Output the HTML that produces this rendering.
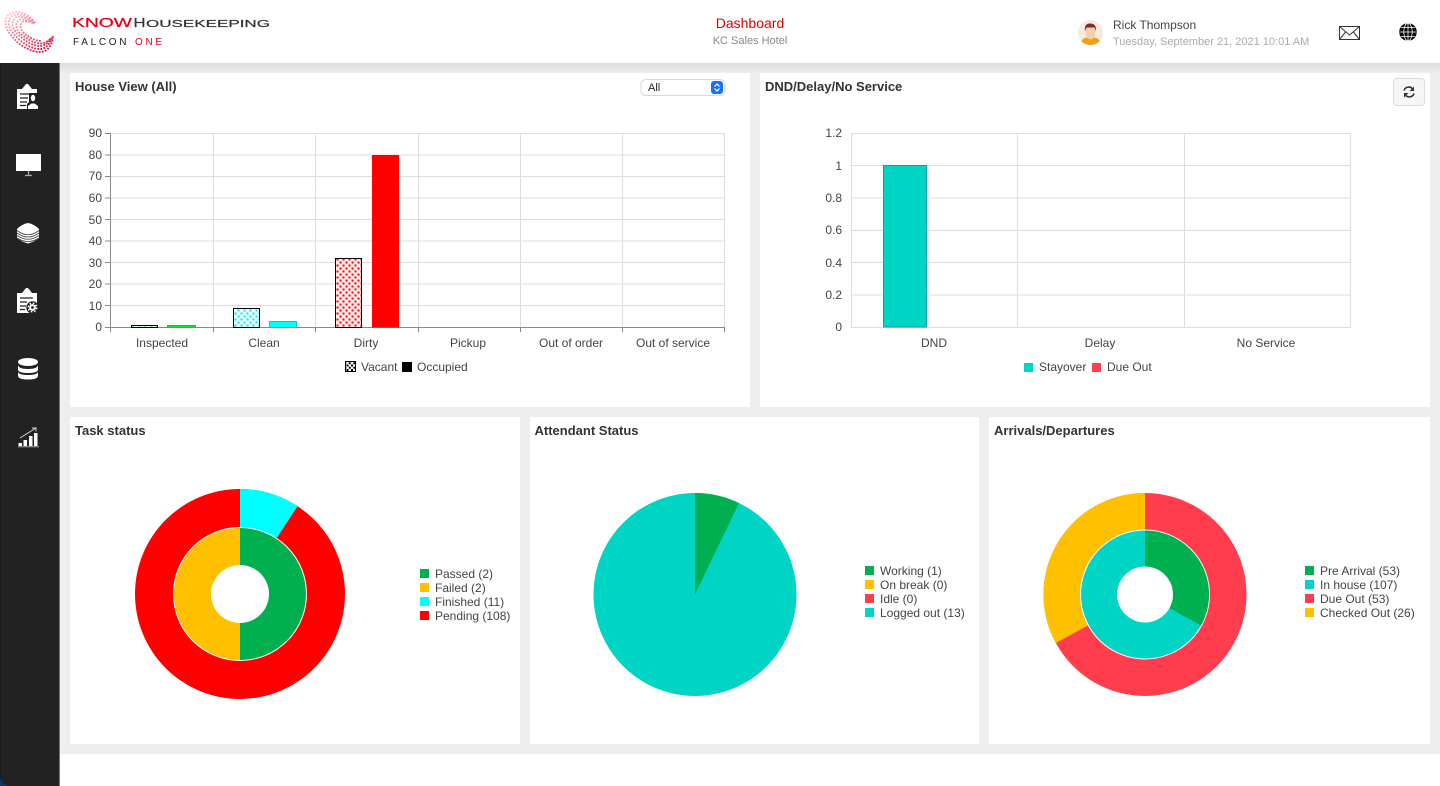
<!DOCTYPE html>
<html lang="en"><head><meta charset="utf-8"><title>Dashboard</title>
<style>
html,body{margin:0;padding:0;width:1440px;height:786px;overflow:hidden;background:#fff}
svg{display:block;font-family:"Liberation Sans",Arial,sans-serif}
.t{font-size:13px;font-weight:bold;fill:#333}
.l{font-size:12px;fill:#444}
.m{text-anchor:middle}
.e{text-anchor:end}
.g{stroke:#ddd;stroke-width:1;fill:none}
.a{stroke:#888;stroke-width:1;fill:none}
</style></head><body>
<svg width="1440" height="786" viewBox="0 0 1440 786" xmlns="http://www.w3.org/2000/svg">
<defs>
<linearGradient id="sh" x1="0" y1="0" x2="0" y2="1"><stop offset="0" stop-color="#dcdcdc"/><stop offset="1" stop-color="#eee"/></linearGradient>
<linearGradient id="lg" gradientUnits="userSpaceOnUse" x1="20" y1="12" x2="38" y2="52"><stop offset="0" stop-color="#fbb8c8"/><stop offset=".5" stop-color="#f0607f"/><stop offset="1" stop-color="#dc0a32"/></linearGradient>
<pattern id="hg" width="6" height="6" patternUnits="userSpaceOnUse"><rect width="6" height="6" fill="#fff"/><path d="M0.500 0.500h2v2h-2zM3.500 3.500h2v2h-2z" fill="#00e020"/></pattern>
<pattern id="hc" width="6" height="6" patternUnits="userSpaceOnUse"><rect width="6" height="6" fill="#eaffff"/><path d="M0.500 0.500h2v2h-2zM3.500 3.500h2v2h-2z" fill="#00e8ee"/></pattern>
<pattern id="hr" width="6" height="6" patternUnits="userSpaceOnUse"><rect width="6" height="6" fill="#ffecec"/><path d="M0.500 0.500h2v2h-2zM3.500 3.500h2v2h-2z" fill="#f00"/></pattern>
<pattern id="hk" width="4.500" height="4.500" patternUnits="userSpaceOnUse"><rect width="4.500" height="4.500" fill="#fff"/><path d="M0 0h2v2h-2zM2.250 2.250h2v2h-2z" fill="#000"/></pattern>
</defs>

<!-- page background -->
<rect x="59" y="63" width="1381" height="691" fill="#eee"/>
<rect x="59" y="63" width="1381" height="10" fill="url(#sh)"/>
<rect x="59" y="754" width="1381" height="32" fill="#fff"/>

<!-- sidebar -->
<rect x="0" y="60" width="60" height="726" fill="#222"/>
<rect x="0" y="60" width="1" height="726" fill="#1a1a1a"/>
<path d="M0 776Q1 784 8 786H0Z" fill="#0b3a63"/>
<rect x="59" y="63" width="1" height="723" fill="#777"/>

<!-- header -->
<rect x="0" y="0" width="1440" height="63" fill="#fff"/>

<!-- logo -->
<g fill="none" stroke="url(#lg)" stroke-width="1.800" stroke-dasharray="1.800 1.300">
<path d="M35 23C29 14 18 9 10 14C3 18 5 27 10 34C18 45 30 52 40 52C48 52 53 44 53 35"/>
<path d="M35 23C28 16 18 12 12 16C7 20 8 27 13 33C20 42 31 49 40 49C46 49 51 43 52.500 36"/>
<path d="M34 23C27 18 19 15 15 18C11 22 12 28 16 32C23 40 32 46 40 46C45 46 49 42 52 37"/>
<path d="M33 23C26 20 21 18 18 21C15 24 16 28 19 32C25 38 33 43 41 43.500C45 43.500 48 41 50 39"/>
<path d="M30 22C26 21 22 21 21 24C20 27 21 30 23 32C28 37 35 41 42 41"/>
</g>
<text x="72" y="27" font-size="13" fill="#e8001c" stroke="#e8001c" stroke-width=".25" textLength="60" lengthAdjust="spacingAndGlyphs">KNOW</text>
<text x="133.500" y="27" font-size="13" fill="#333" stroke="#333" stroke-width=".2" textLength="12" lengthAdjust="spacingAndGlyphs">H</text>
<text x="146" y="27" font-size="10" fill="#333" stroke="#333" stroke-width=".2" textLength="124" lengthAdjust="spacingAndGlyphs">OUSEKEEPING</text>
<text x="73" y="45" font-size="10" fill="#222" letter-spacing="2.700">FALCON</text>
<text x="135" y="45" font-size="10" fill="#e8001c" letter-spacing="2.700">ONE</text>

<!-- centre title -->
<text x="750" y="28" font-size="14" fill="#e00000" class="m">Dashboard</text>
<text x="750" y="44" font-size="11" fill="#888" class="m">KC Sales Hotel</text>

<!-- user -->
<circle cx="1090.500" cy="32.500" r="12.500" fill="#f5ebe0"/>
<path d="M1081 41Q1084 37.500 1087 37.500H1094Q1097 37.500 1100 41Q1096 45 1090.500 45Q1085 45 1081 41Z" fill="#f0a010"/>
<path d="M1085.500 27H1095.500V34Q1094.500 39 1090.500 39.500Q1086.500 39 1085.500 34Z" fill="#f2d0ac"/>
<path d="M1085 31Q1084 24 1089.500 23.500Q1096.500 23 1096 31L1094.500 27.500H1086.500Z" fill="#7a2a30"/>
<text x="1113" y="29" font-size="12" fill="#444">Rick Thompson</text>
<text x="1113" y="45" font-size="11" fill="#aaa">Tuesday, September 21, 2021 10:01 AM</text>
<g fill="none" stroke="#333" stroke-width="1"><rect x="1339.500" y="26.500" width="20" height="13"/><path d="M1339.500 26.500L1349.500 35L1359.500 26.500M1339.500 39.500L1346 31.500M1359.500 39.500L1353 31.500"/></g>
<circle cx="1408" cy="32" r="8.800" fill="#000"/>
<g fill="none" stroke="#fff" stroke-width=".8"><ellipse cx="1408" cy="32" rx="4.200" ry="8.800"/><path d="M1408 23V41M1399.500 32H1416.500M1401 27.500H1415M1401 36.500H1415"/></g>

<!-- panels -->
<rect x="70" y="73" width="680" height="334" fill="#fff"/>
<rect x="760" y="73" width="670" height="334" fill="#fff"/>
<rect x="70" y="417" width="450" height="327" fill="#fff"/>
<rect x="530" y="417" width="449" height="327" fill="#fff"/>
<rect x="989" y="417" width="441" height="327" fill="#fff"/>

<text x="75" y="91" class="t">House View (All)</text>
<text x="765" y="91" class="t">DND/Delay/No Service</text>
<text x="75" y="435" class="t">Task status</text>
<text x="534.500" y="435" class="t">Attendant Status</text>
<text x="994" y="435" class="t">Arrivals/Departures</text>

<!-- select -->
<rect x="641" y="79.500" width="84" height="16" rx="5" fill="#fff" stroke="#d8d8d8"/>
<text x="648" y="91" font-size="11" fill="#222">All</text>
<rect x="711" y="81" width="12" height="13" rx="3" fill="#1b72f0"/>
<path d="M714.500 86.500L717 84L719.500 86.500M714.500 88.500L717 91L719.500 88.500" fill="none" stroke="#fff" stroke-width="1.200"/>

<!-- refresh -->
<rect x="1393.500" y="78.500" width="31" height="27" rx="3" fill="#f6f6f6" stroke="#ddd"/>
<g fill="none" stroke="#333" stroke-width="1.600"><path d="M1404 90.500A5 5 0 0 1 1413 89.500"/><path d="M1414 93.500A5 5 0 0 1 1405 94.500"/></g>
<path d="M1414 86.500V91H1409.500Z M1404 97.500V93H1408.500Z" fill="#333"/>

<!-- bar chart 1 -->
<path class="g" d="M105 133.500H725M105 155H725M105 176.500H725M105 198H725M105 219.500H725M105 241H725M105 262.500H725M105 284H725M105 305.500H725"/>
<path class="g" d="M213.500 133V327M315.500 133V327M418.500 133V327M520.500 133V327M622.500 133V327M724.500 133V327"/>
<path class="a" d="M110.500 133V332M105 327.500H725M105 133.500H110M105 155H110M105 176.500H110M105 198H110M105 219.500H110M105 241H110M105 262.500H110M105 284H110M105 305.500H110M213.500 327V332M315.500 327V332M418.500 327V332M520.500 327V332M622.500 327V332M724.500 327V332"/>
<g class="l e">
<text x="102" y="137">90</text><text x="102" y="159">80</text><text x="102" y="180">70</text><text x="102" y="202">60</text><text x="102" y="224">50</text><text x="102" y="245">40</text><text x="102" y="267">30</text><text x="102" y="288">20</text><text x="102" y="310">10</text><text x="102" y="331">0</text>
</g>
<rect x="131.500" y="325.500" width="26" height="2" fill="url(#hg)" stroke="#000"/>
<rect x="167.500" y="325.500" width="28" height="2" fill="#00f020" stroke="#00d020"/>
<rect x="233.500" y="308.500" width="26" height="19" fill="url(#hc)" stroke="#000"/>
<rect x="269.500" y="321.500" width="27" height="6" fill="#0ff" stroke="#0cc"/>
<rect x="335.500" y="258.500" width="26" height="69" fill="url(#hr)" stroke="#000"/>
<rect x="372" y="155" width="27" height="172.500" fill="#f00"/>
<g class="l m">
<text x="162" y="347">Inspected</text><text x="264" y="347">Clean</text><text x="366" y="347">Dirty</text><text x="468" y="347">Pickup</text><text x="571" y="347">Out of order</text><text x="673" y="347">Out of service</text>
</g>
<rect x="345.500" y="361.500" width="10" height="10" fill="url(#hk)" stroke="#000"/>
<text x="361" y="371" class="l">Vacant</text>
<rect x="402" y="362" width="10" height="10" fill="#000"/>
<text x="417" y="371" class="l">Occupied</text>

<!-- bar chart 2 -->
<path class="g" d="M851 133.500H1351M851 165.500H1351M851 198H1351M851 230.500H1351M851 262.500H1351M851 295H1351M851 327.500H1351"/>
<path class="g" d="M851.500 133V327M1017.500 133V327M1184.500 133V327M1350.500 133V327"/>
<g class="l e">
<text x="842" y="137">1.2</text><text x="842" y="170">1</text><text x="842" y="202">0.8</text><text x="842" y="234">0.6</text><text x="842" y="267">0.4</text><text x="842" y="299">0.2</text><text x="842" y="331">0</text>
</g>
<rect x="883.500" y="165.500" width="43" height="161.500" fill="#00d4c4" stroke="#00a8a0"/>
<g class="l m"><text x="934" y="347">DND</text><text x="1100" y="347">Delay</text><text x="1266" y="347">No Service</text></g>
<rect x="1024" y="363" width="9" height="9" fill="#00d4c4"/><text x="1039" y="371" class="l">Stayover</text>
<rect x="1092" y="363" width="9" height="9" fill="#ff3d4d"/><text x="1107" y="371" class="l">Due Out</text>

<!-- Task status donut -->
<circle cx="240" cy="594" r="105" fill="#f00"/>
<path d="M240 594V489A105 105 0 0 1 297.600 506.200Z" fill="#0ff"/>
<path d="M240 527.500A66.500 66.500 0 0 1 240 660.500Z" fill="#00b050"/>
<path d="M240 527.500A66.500 66.500 0 0 0 240 660.500Z" fill="#ffc000"/>
<circle cx="240" cy="594" r="66.500" fill="none" stroke="#fff" stroke-width="1"/>
<circle cx="240" cy="594" r="29" fill="#fff"/>
<rect x="420" y="569" width="9" height="9" fill="#00b050"/><text x="435" y="578" class="l">Passed (2)</text>
<rect x="420" y="583" width="9" height="9" fill="#ffc000"/><text x="435" y="592" class="l">Failed (2)</text>
<rect x="420" y="597" width="9" height="9" fill="#0ff"/><text x="435" y="606" class="l">Finished (11)</text>
<rect x="420" y="611" width="9" height="9" fill="#f00"/><text x="435" y="620" class="l">Pending (108)</text>

<!-- Attendant pie -->
<circle cx="695" cy="594.500" r="101.500" fill="#00d4c4"/>
<path d="M695 594.500V493A101.500 101.500 0 0 1 739 503Z" fill="#00b050"/>
<rect x="865" y="566" width="9" height="9" fill="#00b050"/><text x="880" y="575" class="l">Working (1)</text>
<rect x="865" y="580" width="9" height="9" fill="#ffc000"/><text x="880" y="589" class="l">On break (0)</text>
<rect x="865" y="594" width="9" height="9" fill="#ff3d4d"/><text x="880" y="603" class="l">Idle (0)</text>
<rect x="865" y="608" width="9" height="9" fill="#00d4c4"/><text x="880" y="617" class="l">Logged out (13)</text>

<!-- Arrivals donut -->
<circle cx="1145" cy="594.500" r="101.500" fill="#ff3d4d"/>
<path d="M1145 594.500L1055.800 643A101.500 101.500 0 0 1 1145 493Z" fill="#ffc000"/>
<circle cx="1145" cy="594.500" r="64.500" fill="#00d4c4" stroke="#fff" stroke-width="1"/>
<path d="M1145 594.500V530.500A64 64 0 0 1 1201 625.500Z" fill="#00b050"/>
<circle cx="1145" cy="594.500" r="28" fill="#fff"/>
<rect x="1305" y="566" width="9" height="9" fill="#00b050"/><text x="1320" y="575" class="l">Pre Arrival (53)</text>
<rect x="1305" y="580" width="9" height="9" fill="#00d4c4"/><text x="1320" y="589" class="l">In house (107)</text>
<rect x="1305" y="594" width="9" height="9" fill="#ff3d4d"/><text x="1320" y="603" class="l">Due Out (53)</text>
<rect x="1305" y="608" width="9" height="9" fill="#ffc000"/><text x="1320" y="617" class="l">Checked Out (26)</text>

<!-- sidebar icons -->
<!-- clipboard person -->
<path d="M17 89H22L26 84H28L32 89H37V109H17Z" fill="#fff"/>
<path d="M20 94H34M20 98H28M20 102H27M20 105.500H26" stroke="#222" stroke-width="1.200" fill="none"/>
<path d="M29 93H38.500V110H27V104L29 102Z" fill="#222"/>
<ellipse cx="33" cy="98" rx="2.200" ry="3.200" fill="#fff"/>
<path d="M28 109V106L31.500 103.500H34.500L38 106V109Z" fill="#fff"/>
<!-- monitor -->
<rect x="16" y="154" width="25" height="17" fill="#fff"/>
<path d="M28.500 171V175M25 175.500H32" stroke="#aaa" stroke-width="1.300" fill="none"/>
<!-- layers -->
<path d="M28 223Q34 224 39 229V238Q34 242 28 243.500Q22 242 17 238V229Q22 224 28 223Z" fill="#fff"/>
<path d="M17 230.500Q28 239 39 230.500M17 233Q28 241 39 233M17 235.500Q28 243 39 235.500M17 238Q28 245 39 238" fill="none" stroke="#444" stroke-width=".8"/>
<!-- clipboard gear -->
<path d="M17 293H22L26 288H28L32 293H37V303H36V313H17Z" fill="#fff"/>
<path d="M20 298H33M20 302H27M20 306H26M20 309.500H25" stroke="#222" stroke-width="1.200" fill="none"/>
<circle cx="32.500" cy="307.500" r="6.200" fill="#222"/>
<circle cx="32.500" cy="307.500" r="3.400" fill="#fff"/>
<circle cx="32.500" cy="307.500" r="4.300" fill="none" stroke="#fff" stroke-width="1.400" stroke-dasharray="1.700 1.700"/>
<circle cx="32.500" cy="307.500" r="1.400" fill="#222"/>
<!-- database -->
<ellipse cx="28" cy="362" rx="10" ry="4" fill="#fff"/>
<path d="M18 364.500Q18 369 28 369Q38 369 38 364.500V369.500Q38 373 28 373Q18 373 18 369.500Z" fill="#fff"/>
<path d="M18 371.500Q18 375 28 375Q38 375 38 371.500V375.500Q38 379.500 28 379.500Q18 379.500 18 375.500Z" fill="#fff"/>
<!-- chart -->
<rect x="18.500" y="443" width="3.500" height="3" fill="#fff"/><rect x="23.500" y="440" width="3.500" height="6" fill="#fff"/><rect x="29" y="436" width="3.500" height="10" fill="#fff"/><rect x="34" y="433" width="3.500" height="13" fill="#fff"/>
<path d="M18 446.800H39" stroke="#aaa" stroke-width="1"/>
<path d="M20 438L36 428M32 428H36V431.500" fill="none" stroke="#ddd" stroke-width=".9"/>
</svg>
</body></html>
